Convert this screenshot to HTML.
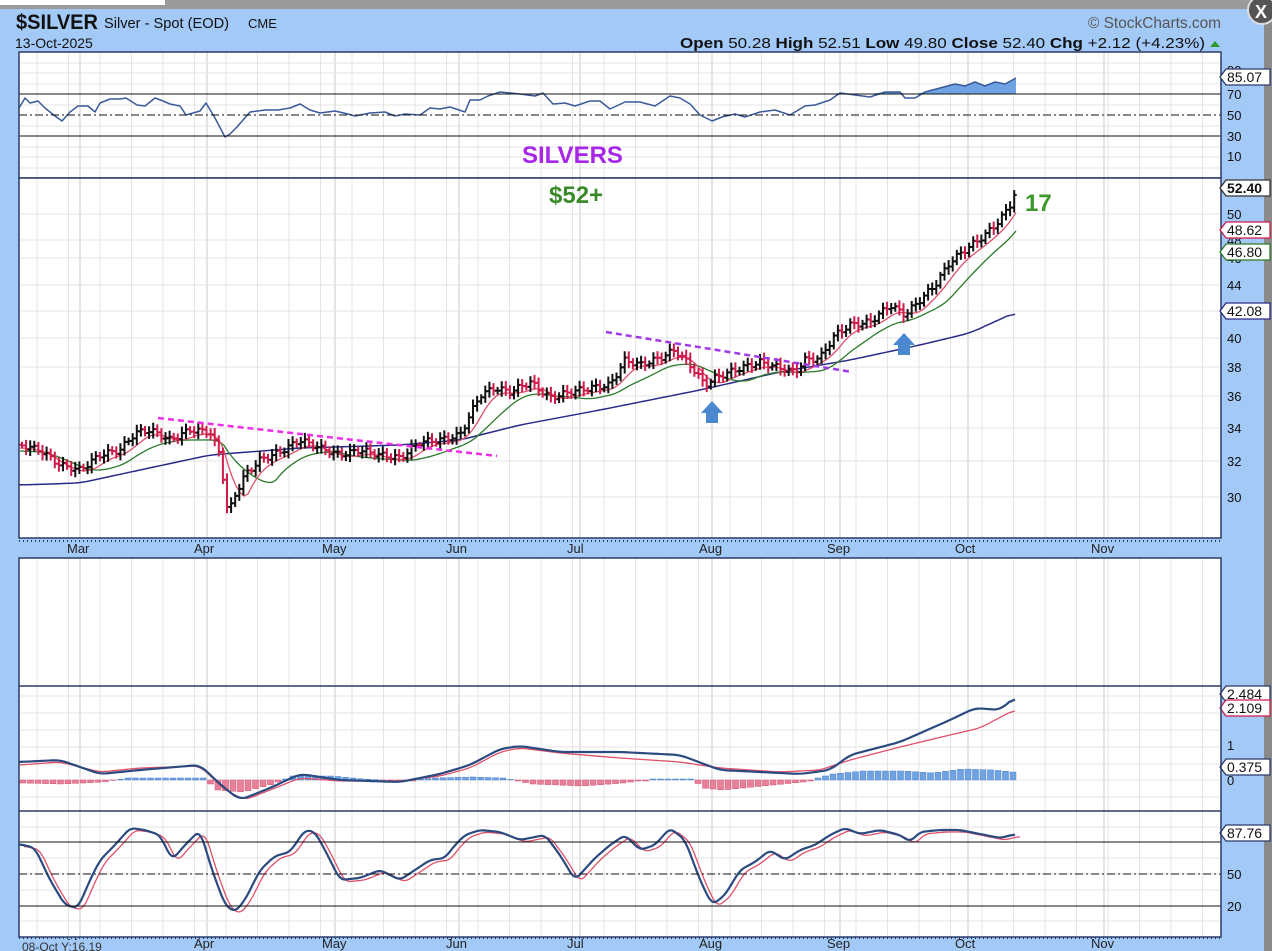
<!DOCTYPE html>
<html><head><meta charset="utf-8"><style>
html,body{margin:0;padding:0;width:1272px;height:951px;overflow:hidden;background:#a3c9f7;font-family:"Liberation Sans",sans-serif}
svg{position:absolute;left:0;top:0}
</style></head><body>
<svg id="s" width="1272" height="951" xmlns="http://www.w3.org/2000/svg" font-family="Liberation Sans, sans-serif">
<rect x="0" y="0" width="1272" height="951" fill="#a3c9f7"/>
<rect x="0" y="0" width="1272" height="9" fill="#9a9a9a"/>
<rect x="0" y="0" width="165" height="5" fill="#fff"/>
<rect x="1264" y="0" width="8" height="951" fill="#8a8a8a"/>
<circle cx="1262" cy="10" r="14" fill="#555" stroke="#ddd" stroke-width="2"/>
<text x="1255" y="18" font-size="18" font-weight="bold" fill="#fff">X</text>
<text x="16" y="29" font-size="21" font-weight="bold" fill="#111" textLength="82" lengthAdjust="spacingAndGlyphs">$SILVER</text>
<text x="104" y="28" font-size="15" fill="#111" textLength="125" lengthAdjust="spacingAndGlyphs">Silver - Spot (EOD)</text>
<text x="204" y="28" font-size="1" fill="#111"> </text>
<text x="248" y="28" font-size="13" fill="#111">CME</text>
<text x="15" y="48" font-size="14" fill="#111">13-Oct-2025</text>
<text x="1088" y="28" font-size="16" fill="#555" textLength="133" lengthAdjust="spacingAndGlyphs">© StockCharts.com</text>
<text x="680" y="48" font-size="15" fill="#111" textLength="525" lengthAdjust="spacingAndGlyphs"><tspan font-weight="bold">Open</tspan> 50.28 <tspan font-weight="bold">High</tspan> 52.51 <tspan font-weight="bold">Low</tspan> 49.80 <tspan font-weight="bold">Close</tspan> 52.40 <tspan font-weight="bold">Chg</tspan> +2.12 (+4.23%)</text>
<polygon points="1210,47 1220,47 1215,41" fill="#2a9a2a"/>
</svg>
<script>
const S=document.getElementById('s'),NS='http://www.w3.org/2000/svg';
function el(t,a,p){const e=document.createElementNS(NS,t);for(const k in a)e.setAttribute(k,a[k]);(p||S).appendChild(e);return e}
const L=19,R=1221;
const months=[[80,'Mar'],[207,'Apr'],[335,'May'],[459,'Jun'],[580,'Jul'],[712,'Aug'],[840,'Sep'],[968,'Oct'],[1104,'Nov']];
function panel(y0,y1,hl){
 el('rect',{x:L,y:y0,width:R-L,height:y1-y0,fill:'#fff'});
 for(let x=L+18;x<R;x+=31.5)el('line',{x1:x,x2:x,y1:y0,y2:y1,stroke:'#e4e4e4'});
 months.forEach(m=>el('line',{x1:m[0],x2:m[0],y1:y0,y2:y1,stroke:'#c8c8c8'}));
 (hl||[]).forEach(y=>el('line',{x1:L,x2:R,y1:y,y2:y,stroke:'#e4e4e4'}));
}
function border(y0,y1){el('rect',{x:L,y:y0,width:R-L,height:y1-y0,fill:'none',stroke:'#2b3a67','stroke-width':1.5})}
function pl(pts,c,w,extra){const a={points:pts.map(p=>p.join(',')).join(' '),fill:'none',stroke:c,'stroke-width':w||1.5,'stroke-linejoin':'round'};Object.assign(a,extra||{});return el('polyline',a)}
function smooth(pts,step){const r=[];for(let x=pts[0][0];x<=pts[pts.length-1][0];x+=step||3)r.push([x,interp(pts,x)]);const o=r.map((p,i)=>{let s=0,n=0;for(let k=-2;k<=2;k++){const q=r[i+k];if(q){s+=q[1];n++}}return [p[0],s/n]});return o}
// RSI
panel(52,178,[63,73,84,105,126,147,157,168]);
const rsi=[[19,108],[25,98],[30,103],[38,101],[45,108],[55,116],[62,121],[70,112],[78,106],[88,106],[95,112],[100,103],[110,99],[120,99],[126,98],[137,105],[145,106],[155,98],[163,101],[170,104],[180,106],[186,115],[200,111],[206,103],[215,118],[225,137],[230,134],[237,127],[250,112],[265,110],[278,110],[290,108],[300,104],[310,110],[320,113],[335,111],[348,114],[355,116],[370,113],[385,112],[395,116],[405,114],[420,115],[430,108],[440,109],[450,107],[465,112],[470,100],[480,100],[488,96],[500,92],[520,94],[535,96],[543,93],[553,104],[565,103],[575,106],[590,101],[600,101],[610,109],[625,102],[640,102],[655,106],[670,96],[680,98],[690,104],[700,115],[712,121],[722,117],[735,114],[745,117],[760,112],[775,110],[790,115],[805,106],[815,105],[830,100],[840,93],[855,95],[870,97],[885,92],[900,92],[905,98],[915,98],[925,92],[940,88],[955,84],[965,86],[975,82],[985,86],[995,82],[1005,84],[1016,78]];
const fill=rsi.filter(p=>p[0]>=835).map(p=>[p[0],Math.min(p[1],94)]);
el('polygon',{points:[[835,94],...fill,[1016,94]].map(p=>p.join(',')).join(' '),fill:'#6fa3e3'});
pl(rsi,'#3a5a9a',1.5);
el('line',{x1:L,x2:R,y1:94,y2:94,stroke:'#111'});el('line',{x1:L,x2:R,y1:136,y2:136,stroke:'#111'});
el('line',{x1:L,x2:R,y1:115,y2:115,stroke:'#111','stroke-dasharray':'8,3,2,3'});
border(52,178);
// Price
panel(178,538,[214,240,258,285,311,338,367,396,428,461,497]);
const path=[[20,445],[40,450],[60,465],[80,470],[100,455],[120,450],[135,433],[150,430],[170,440],[190,430],[210,432],[220,455],[228,515],[235,495],[245,475],[260,460],[280,452],[300,440],[320,448],[340,455],[360,450],[380,455],[400,458],[420,442],[440,440],[460,435],[470,415],[480,395],[495,388],[510,392],[530,382],[550,398],[570,392],[590,388],[610,385],[625,360],[640,365],[660,358],[675,350],[690,365],[705,385],[715,378],[735,370],[760,362],[780,368],[795,372],[805,360],[820,358],[835,335],[850,325],[870,322],[890,305],[905,315],[920,300],[935,285],[950,262],[965,250],[985,235],[1000,220],[1010,205],[1016,190]];
function interp(pts,x){for(let i=1;i<pts.length;i++)if(x<=pts[i][0]){const a=pts[i-1],b=pts[i],t=(x-a[0])/(b[0]-a[0]||1);return a[1]+t*(b[1]-a[1])}return pts[pts.length-1][1]}
const ma=(lag,off)=>{const r=[];for(let x=20;x<=1016;x+=4){let s=0,n=0;for(let k=0;k<lag;k+=4){s+=interp(path,Math.max(20,x-k));n++}r.push([x,s/n+off])}return r};
pl(smooth([[19,485],[80,483],[140,470],[210,455],[300,448],[400,445],[460,440],[520,425],[600,410],[700,390],[780,372],[850,360],[920,345],[970,333],[1016,312]],4),'#2a2a8a',1.5);
pl(ma(50,6),'#2a7a2a',1.3);
pl(ma(24,3),'#e0506a',1.3);
let prev=interp(path,19);
for(let x=22,i=0;x<=1016;x+=4.1,i++){
 const c=interp(path,x)+Math.sin(i*1.7)*3;const up=c<prev;const col=up?'#111':'#d01a4a';
 const h=6+Math.abs(Math.sin(i*2.3))*7;
 el('line',{x1:x,x2:x,y1:Math.min(c,prev)-h/2,y2:Math.max(c,prev)+h/2,stroke:col,'stroke-width':2});
 el('line',{x1:x-2.5,x2:x,y1:prev,y2:prev,stroke:col,'stroke-width':2});
 el('line',{x1:x,x2:x+2.5,y1:c,y2:c,stroke:col,'stroke-width':2});prev=c;
}
el('line',{x1:158,y1:418,x2:497,y2:456,stroke:'#ee2ee6','stroke-width':2.5,'stroke-dasharray':'6,4'});
el('line',{x1:606,y1:332,x2:852,y2:372,stroke:'#a03ae8','stroke-width':2.5,'stroke-dasharray':'6,4'});
function arrow(x,y){el('polygon',{points:`${x},${y} ${x+11},${y+12} ${x+6},${y+12} ${x+6},${y+22} ${x-6},${y+22} ${x-6},${y+12} ${x-11},${y+12}`,fill:'#4a88cf'})}
arrow(712,401);arrow(904,333);
border(178,538);
el('text',{x:522,y:163,'font-size':24,'font-weight':'bold',fill:'#a726e8'}).textContent='SILVERS';
el('text',{x:549,y:203,'font-size':24,'font-weight':'bold',fill:'#3a8a2a'}).textContent='$52+';
el('text',{x:1025,y:211,'font-size':24,'font-weight':'bold',fill:'#3a9a2a'}).textContent='17';
function lab(y,t,fs){el('text',{x:1227,y:y+5,'font-size':fs||13,fill:'#111'}).textContent=t}
function tag(y,t,c,b){el('polygon',{points:`1220,${y} 1226,${y-8} 1270,${y-8} 1270,${y+8} 1226,${y+8}`,fill:'#fff',stroke:c,'stroke-width':1.3});const e=el('text',{x:1227,y:y+5,'font-size':14,fill:'#111','font-weight':b?'bold':'normal'});e.textContent=t}
[[94,'70'],[115,'50'],[136,'30'],[156,'10']].forEach(a=>lab(a[0],a[1]));lab(70,'90');tag(77,'85.07','#2b3a67');
[[214,'50'],[240,'48'],[258,'46'],[285,'44'],[338,'40'],[367,'38'],[396,'36'],[428,'34'],[461,'32'],[497,'30']].forEach(a=>lab(a[0],a[1]));
tag(188,'52.40','#333',1);tag(230,'48.62','#d01a4a');tag(252,'46.80','#2a7a2a');tag(311,'42.08','#2a2a8a');
function dates(y,top){months.forEach(m=>{el('text',{x:m[0]-13,y:y,'font-size':13,fill:'#222'}).textContent=m[1]});el('line',{x1:L,x2:R,y1:top,y2:top,stroke:'#2b3a67','stroke-dasharray':'1,3','stroke-width':2})}
dates(553,541);
panel(558,937,[696,713,730,747,764,780,797,827,842,858,874,890,906,921]);
el('line',{x1:L,x2:R,y1:686,y2:686,stroke:'#2b3a67','stroke-width':1.5});
el('line',{x1:L,x2:R,y1:811,y2:811,stroke:'#2b3a67','stroke-width':1.5});
const hist=[[19,-3],[60,-4],[100,-2],[125,2],[200,2],[215,-10],[240,-12],[270,-4],[290,4],[330,4],[360,1],[400,-1],[430,2],[470,3],[500,2],[530,-4],[580,-6],[620,-3],[650,1],[690,1],[700,-8],[720,-10],[760,-6],[800,-2],[830,6],[860,9],[900,9],[930,7],[960,11],[990,10],[1010,8],[1016,12]];
for(let x=20;x<=1016;x+=7.5){const v=interp(hist,x);const y=780;
 el('rect',{x:x,y:v>0?y-v:y,width:6,height:Math.abs(v)||1,fill:v>0?'#6fa3e3':'#e78098',stroke:v>0?'#4a80c8':'#d05070','stroke-width':.5});}
pl(smooth([[19,765],[60,762],[100,772],[140,768],[200,766],[225,790],[245,800],[270,790],[300,778],[340,781],[400,781],[440,776],[470,768],[500,752],[520,748],[560,753],[620,758],[680,762],[720,768],[780,772],[820,770],[850,760],[900,747],[950,735],[980,728],[1016,709]],3),'#e0506a',1.3);
pl(smooth([[19,762],[60,760],[100,774],[140,770],[200,765],[222,786],[240,800],[270,788],[300,774],[340,780],[400,782],[440,774],[470,765],[500,749],[520,746],[560,752],[620,752],[680,755],[720,770],[760,772],[800,774],[830,770],[850,755],[900,742],[950,720],[975,708],[1000,710],[1016,696]],3),'#2b4a80',2.2);
tag(694,'2.484','#2b3a67');tag(708,'2.109','#d01a4a');tag(767,'0.375','#2b3a67');lab(745,'1');lab(780,'0');
const st=[[19,844],[35,848],[50,880],[65,905],[78,908],[90,880],[100,860],[115,845],[130,828],[145,830],[160,835],[172,860],[185,845],[200,830],[212,870],[225,905],[235,912],[245,900],[260,870],[275,856],[290,852],[305,830],[315,832],[325,850],[340,880],[360,878],[380,870],[400,880],[415,870],[430,860],[445,858],[455,845],[465,835],[480,830],[500,832],[520,840],[545,835],[560,855],[575,880],[595,858],[610,845],[625,835],[640,850],[655,845],[670,828],[685,840],[700,880],[712,905],[725,895],[740,870],[755,862],[770,850],[785,860],[800,850],[815,845],[830,835],[845,828],[860,834],[880,830],[900,835],[910,842],[920,832],[940,830],[960,830],[980,834],[1000,838],[1016,834]];
const sts=smooth(st,2);
pl(sts.map(p=>[p[0]+5,p[1]+2]),'#e0506a',1.3);pl(sts,'#2b4a80',2.2);
el('line',{x1:L,x2:R,y1:842,y2:842,stroke:'#111'});el('line',{x1:L,x2:R,y1:906,y2:906,stroke:'#111'});
el('line',{x1:L,x2:R,y1:874,y2:874,stroke:'#111','stroke-dasharray':'8,3,2,3'});
lab(874,'50');lab(906,'20');tag(833,'87.76','#2b3a67');
border(558,937);
dates(948,938);
el('rect',{x:19,y:940,width:110,height:12,fill:'#a3c9f7'});
el('text',{x:22,y:951,'font-size':12,fill:'#333'}).textContent='08-Oct Y:16.19';
</script>
</body></html>
